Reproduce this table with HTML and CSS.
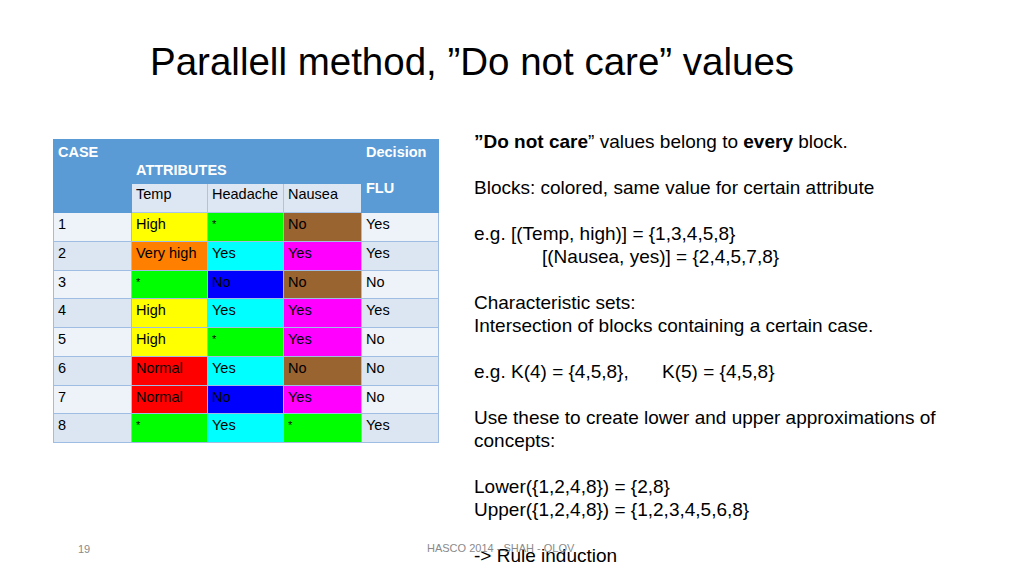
FILE: index.html
```html
<!DOCTYPE html>
<html>
<head>
<meta charset="utf-8">
<link rel="stylesheet" href="styles.css">
</head>
<body>
<div class="slide">
  <h1 class="title">Parallell method, ”Do not care” values</h1>
  <div class="content">
    <table class="grid">
      <colgroup>
        <col class="c-case"><col class="c-temp"><col class="c-head"><col class="c-naus"><col class="c-dec">
      </colgroup>
      <thead>
        <tr class="hrow-a">
          <th rowspan="2" class="h-case">CASE</th>
          <th colspan="3" class="h-attr">ATTRIBUTES</th>
          <th rowspan="2" class="h-dec">Decision<br><br>FLU</th>
        </tr>
        <tr class="hrow-b">
          <th class="sub">Temp</th>
          <th class="sub">Headache</th>
          <th class="sub">Nausea</th>
        </tr>
      </thead>
      <tbody>
        <tr class="odd"><td class="id">1</td><td class="yellow">High</td><td class="green star">*</td><td class="brown">No</td><td class="dec">Yes</td></tr>
        <tr class="even"><td class="id">2</td><td class="orange">Very high</td><td class="cyan">Yes</td><td class="magenta">Yes</td><td class="dec">Yes</td></tr>
        <tr class="odd"><td class="id">3</td><td class="green star">*</td><td class="blue">No</td><td class="brown">No</td><td class="dec">No</td></tr>
        <tr class="even"><td class="id">4</td><td class="yellow">High</td><td class="cyan">Yes</td><td class="magenta">Yes</td><td class="dec">Yes</td></tr>
        <tr class="odd"><td class="id">5</td><td class="yellow">High</td><td class="green star">*</td><td class="magenta">Yes</td><td class="dec">No</td></tr>
        <tr class="even"><td class="id">6</td><td class="red">Normal</td><td class="cyan">Yes</td><td class="brown">No</td><td class="dec">No</td></tr>
        <tr class="odd"><td class="id">7</td><td class="red">Normal</td><td class="blue">No</td><td class="magenta">Yes</td><td class="dec">No</td></tr>
        <tr class="even"><td class="id">8</td><td class="green star">*</td><td class="cyan">Yes</td><td class="green star">*</td><td class="dec">Yes</td></tr>
      </tbody>
    </table>
    <div class="notes">
      <p><b>”Do not care</b>” values belong to <b>every</b> block.</p>
      <p>Blocks: colored, same value for certain attribute</p>
      <p>e.g. [(Temp, high)] = {1,3,4,5,8}<br><span class="indent">[(Nausea, yes)] = {2,4,5,7,8}</span></p>
      <p>Characteristic sets:<br>Intersection of blocks containing a certain case.</p>
      <p><span class="tab">e.g. K(4) = {4,5,8},</span>K(5) = {4,5,8}</p>
      <p>Use these to create lower and upper approximations of concepts:</p>
      <p>Lower({1,2,4,8}) = {2,8}<br>Upper({1,2,4,8}) = {1,2,3,4,5,6,8}</p>
      <p class="last">-&gt; Rule induction</p>
    </div>
  </div>
  <div class="footer">
    <span class="page">19</span>
    <span class="credit">HASCO 2014 - SHAH - OLOV</span>
  </div>
</div>
</body>
</html>
```
FILE: styles.css
```css
html, body {
  margin: 0;
  padding: 0;
  background: #ffffff;
}

.slide {
  position: relative;
  width: 1024px;
  height: 576px;
  box-sizing: border-box;
  padding-top: 40px;
  overflow: hidden;
  font-family: "Liberation Sans", Arial, sans-serif;
  color: #000;
}

.title {
  margin: 0 0 0 150px;
  font-size: 38.5px;
  font-weight: normal;
  line-height: 44px;
  height: 44px;
}

.content {
  display: flex;
  align-items: flex-start;
  margin-top: 46px;
}

/* ---------- table ---------- */
.grid {
  margin: 9px 0 0 53px;
  border-collapse: collapse;
  font-size: 14.5px;
  line-height: 17px;
  table-layout: fixed;
  width: 385px;
  border: 1px solid #8fb1db;
}

.c-case { width: 78px; }
.c-temp { width: 76px; }
.c-head { width: 76px; }
.c-naus { width: 78px; }
.c-dec  { width: 77px; }

.grid th,
.grid td {
  border: 1px solid #9fbde3;
  padding: 0 0 0 4px;
  text-align: left;
  font-weight: normal;
  overflow: hidden;
  white-space: nowrap;
}

.hrow-a { height: 44px; }
.hrow-b { height: 29px; }

.grid .h-case,
.grid .h-attr,
.grid .h-dec {
  background: #5b9bd5;
  color: #ffffff;
  font-weight: bold;
  border-color: #5b9bd5;
}

.grid .h-case {
  vertical-align: top;
  padding-top: 4px;
}

.grid .h-attr {
  vertical-align: bottom;
  padding-bottom: 4px;
}

.grid .h-dec {
  vertical-align: top;
  padding-top: 3px;
  line-height: 18px;
}

.grid .sub {
  background: #dde7f3;
  color: #000;
  vertical-align: top;
  padding-top: 2px;
  border-color: #a9c4e6;
}

.grid tbody tr { height: 28.75px; }

.grid tbody td {
  vertical-align: top;
  padding-top: 3px;
}

.odd .id,
.odd .dec { background: #eef3fa; }
.even .id,
.even .dec { background: #dce6f2; }

.yellow  { background: #ffff00; }
.green   { background: #00ff00; }
.brown   { background: #9a6431; }
.orange  { background: #ff7f00; }
.cyan    { background: #00ffff; }
.magenta { background: #ff00ff; }
.blue    { background: #0000ff; }
.red     { background: #ff0000; }

.grid .star { font-size: 11px; }

/* ---------- notes ---------- */
.notes {
  margin-left: 35px;
  width: 480px;
  font-size: 19px;
  line-height: 23px;
}

.notes p {
  margin: 0 0 23px 0;
}

.notes p.last { margin-bottom: 0; }

.indent {
  padding-left: 68px;
}

.tab {
  display: inline-block;
  width: 188px;
}

/* ---------- footer overlay ---------- */
.footer {
  position: absolute;
  left: 0;
  top: 540px;
  width: 100%;
  font-size: 11px;
  line-height: 16px;
  color: #8a8a8a;
}

.page {
  position: absolute;
  left: 78px;
  top: 1px;
}

.credit {
  position: absolute;
  left: 427px;
  top: 0;
}
```
